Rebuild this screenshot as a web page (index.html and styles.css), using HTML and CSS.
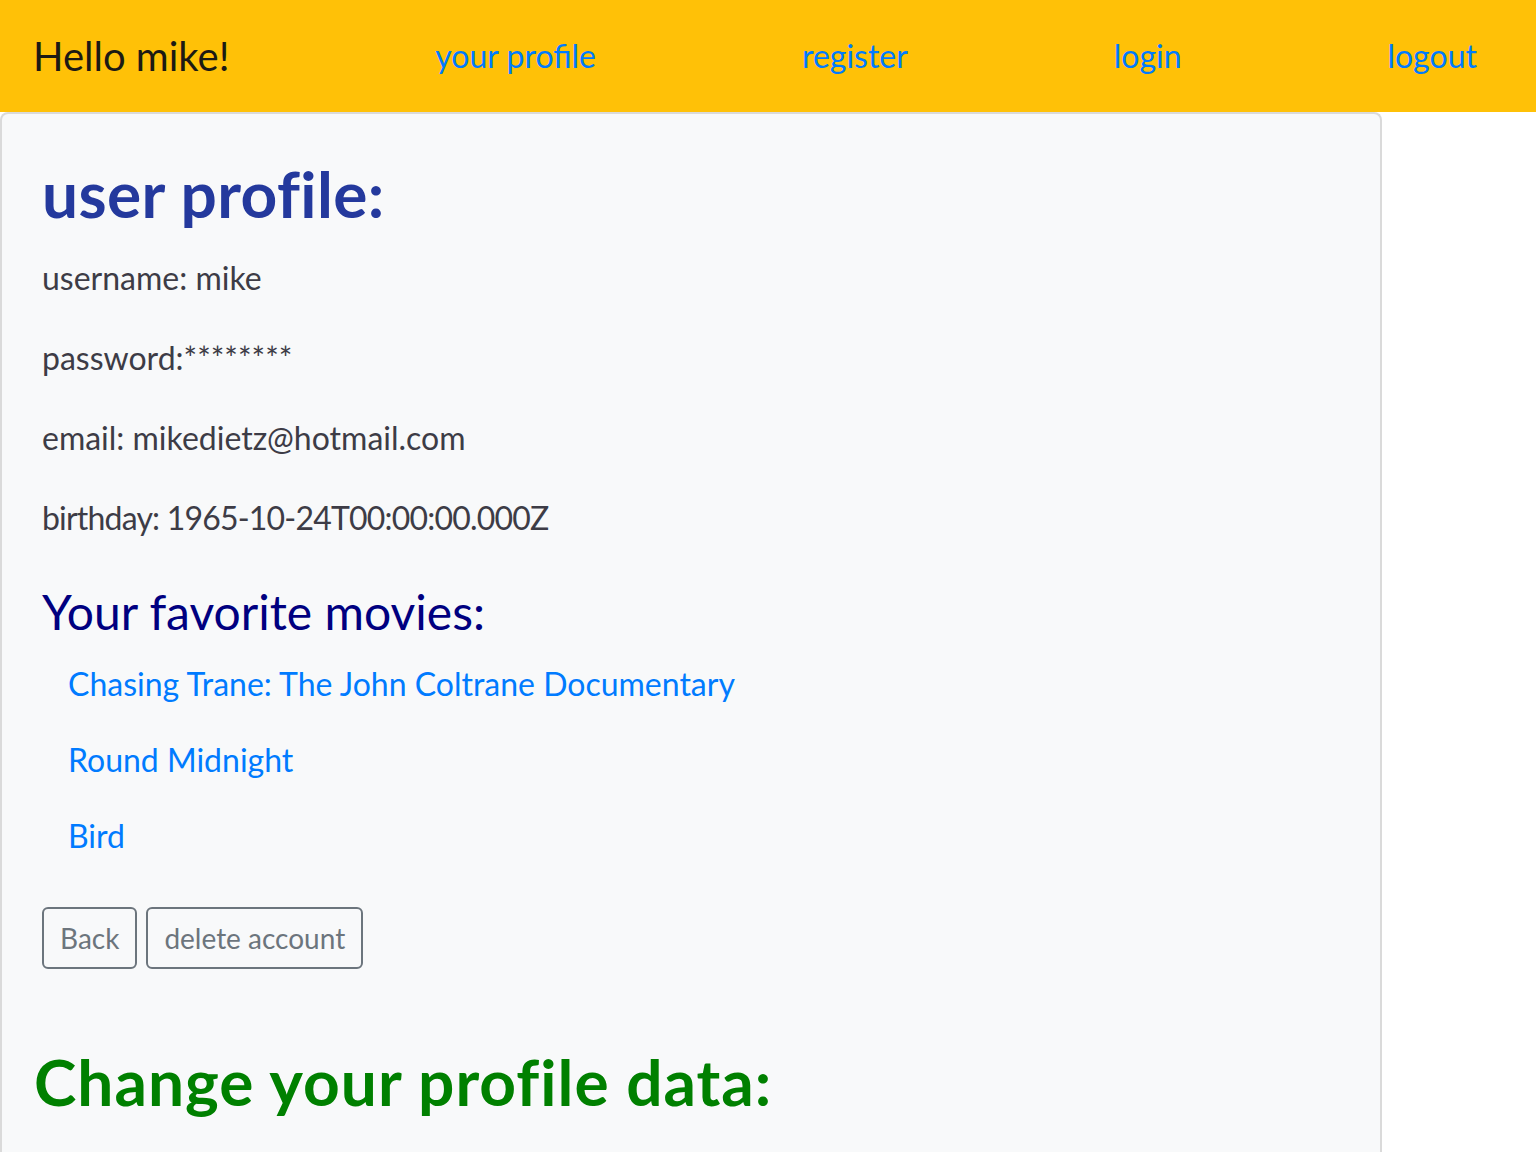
FILE: index.html
```html
<!DOCTYPE html>
<html lang="en">
<head>
<meta charset="utf-8">
<title>myFlix - profile</title>
<link rel="stylesheet" href="styles.css">
</head>
<body>
<nav class="navbar">
  <span class="brand">Hello mike!</span>
  <a class="nav-link" href="#">your profile</a>
  <a class="nav-link" href="#">register</a>
  <a class="nav-link" href="#">login</a>
  <a class="nav-link" href="#">logout</a>
</nav>
<div class="card">
  <div class="card-body">
    <h2 class="title">user profile:</h2>
    <p class="info">username: mike</p>
    <p class="info">password:********</p>
    <p class="info">email: mikedietz@hotmail.com</p>
    <p class="info birthday">birthday: 1965-10-24T00:00:00.000Z</p>
    <h4 class="movies-title">Your favorite movies:</h4>
    <div class="movie-list">
      <button class="btn-link" type="button">Chasing Trane: The John Coltrane Documentary</button>
      <button class="btn-link" type="button">Round Midnight</button>
      <button class="btn-link" type="button">Bird</button>
    </div>
    <div class="actions">
      <button class="btn-outline" type="button">Back</button>
      <button class="btn-outline" type="button">delete account</button>
    </div>
    <h2 class="change-title">Change your profile data:</h2>
  </div>
</div>
</body>
</html>
```
FILE: styles.css
```css
html, body {
  margin: 0;
  padding: 0;
  background: #ffffff;
}
body {
  font-family: Lato, "Noto Sans", sans-serif;
  font-size: 32px;
  color: #3d3c46;
  overflow: hidden;
  height: 1152px;
}
.navbar {
  height: 112px;
  background: #ffc107;
  display: flex;
  align-items: center;
  justify-content: space-between;
  padding: 0 59px 0 33px;
  box-sizing: border-box;
}
.brand {
  font-size: 40px;
  line-height: 60px;
  color: #1c1a14;
}
.nav-link {
  font-size: 32px;
  line-height: 48px;
  color: #007bff;
  text-decoration: none;
}
.card {
  width: 1382px;
  height: 1040px;
  box-sizing: border-box;
  background: #f8f9fa;
  border: 2px solid #dadada;
  border-bottom: 0;
  border-radius: 8px 8px 0 0;
  overflow: hidden;
}
.card-body {
  padding: 42px 40px 0 40px;
}
.title {
  margin: 0 0 21px 0;
  font-size: 64px;
  line-height: 76.8px;
  font-weight: 700;
  color: #24399d;
  letter-spacing: 0.4px;
}
.info {
  margin: 0 0 32px 0;
  line-height: 48px;
}
.birthday {
  letter-spacing: -0.8px;
}
.movies-title {
  margin: 41px 0 6px 0;
  font-size: 48px;
  line-height: 57.6px;
  font-weight: 400;
  color: #000080;
}
.movie-list {
  display: flex;
  flex-direction: column;
  align-items: flex-start;
}
.btn-link {
  font-family: inherit;
  font-size: 32px;
  line-height: 48px;
  color: #007bff;
  background: none;
  border: 2px solid transparent;
  padding: 12px 24px;
  margin: 0;
  cursor: pointer;
}
.actions {
  margin-top: 33px;
  display: flex;
  gap: 9px;
}
.btn-outline {
  font-family: inherit;
  font-size: 28px;
  line-height: 42px;
  color: #6c757d;
  background: transparent;
  border: 2px solid #6c757d;
  border-radius: 6px;
  padding: 8px 16px;
  margin: 0;
  cursor: pointer;
}
.change-title {
  margin: 75px 0 0 -8px;
  font-size: 64px;
  line-height: 76.8px;
  font-weight: 700;
  color: #008000;
  letter-spacing: 1px;
}
```
